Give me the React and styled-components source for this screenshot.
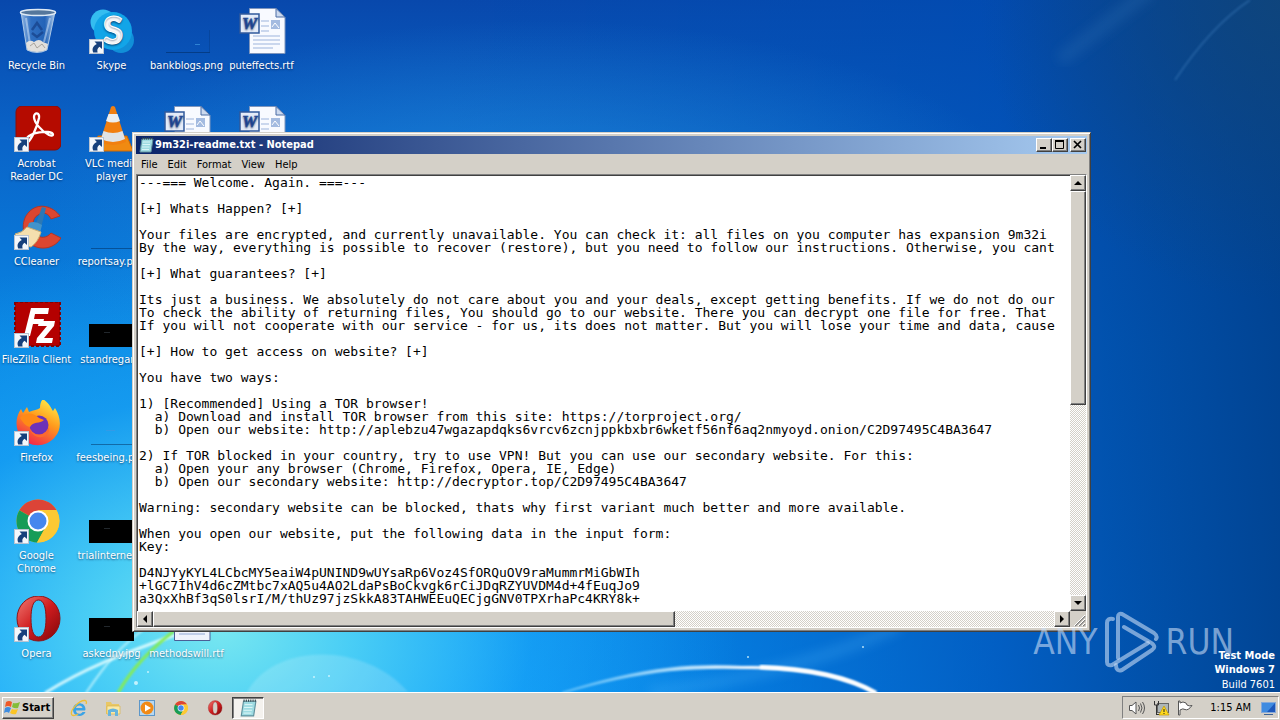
import React from "react";
import styled, { createGlobalStyle, css } from "styled-components";

const GlobalStyle = createGlobalStyle`
  * { box-sizing: border-box; }
  html, body { margin: 0; padding: 0; }
  body {
    font-family: "DejaVu Sans Condensed", "DejaVu Sans", sans-serif;
    font-size: 11px;
    line-height: 13px;
    overflow: hidden;
  }
  button { font: inherit; color: inherit; padding: 0; border: 0; background: none; }
`;

const face = "#d4d0c8";

const raised = css`
  background: ${face};
  border: 1px solid;
  border-color: #ffffff #404040 #404040 #ffffff;
  box-shadow: inset -1px -1px 0 #808080;
`;

const Screen = styled.div`
  display: flex;
  flex-direction: column;
  min-height: 100vh;
  position: relative;
`;

const Desktop = styled.main`
  flex: 1;
  position: relative;
  overflow: hidden;
  background:
    radial-gradient(ellipse 520px 390px at 220px 630px, rgba(125, 235, 240, 0.95) 0, rgba(90, 220, 245, 0.8) 25%, rgba(40, 180, 250, 0.4) 60%, transparent 100%),
    radial-gradient(ellipse 500px 200px at 540px 220px, rgba(40, 150, 225, 0.6) 0, transparent 100%),
    radial-gradient(ellipse 300px 300px at 100% 0, rgba(18, 70, 120, 0.8) 0, transparent 100%),
    linear-gradient(90deg, transparent 35%, rgba(0, 76, 178, 0.75) 78%, rgba(0, 62, 140, 0.92) 100%),
    linear-gradient(180deg, #0848ac 0, #0a64c8 20%, #0886e4 50%, #0898fa 100%);
`;

const Wallpaper = styled.svg`
  position: absolute;
  inset: 0;
  width: 100%;
  height: 100%;
`;

const IconGrid = styled.div`
  position: relative;
  display: grid;
  grid-template-columns: repeat(4, 75px);
  grid-template-rows: repeat(7, 98px);
  width: 300px;
  margin-left: -1px;
`;

const DesktopItem = styled.button`
  grid-column: ${(p) => p.$col};
  grid-row: ${(p) => p.$row};
  display: flex;
  flex-direction: column;
  align-items: center;
  gap: 3px;
  padding-top: 8px;
  color: #ffffff;
  text-align: center;
  text-shadow: 0 1px 2px rgba(0, 20, 60, 0.6);
  white-space: pre;
  svg { width: 48px; height: 48px; flex: none; }
`;

const Window = styled.section`
  position: absolute;
  left: 132px;
  right: 189px;
  top: 132px;
  bottom: 60px;
  display: flex;
  flex-direction: column;
  padding: 3px;
  background: ${face};
  border: 1px solid;
  border-color: ${face} #404040 #404040 ${face};
  box-shadow: inset 1px 1px 0 #ffffff, inset -1px -1px 0 #808080;
`;

const TitleBar = styled.header`
  display: flex;
  align-items: center;
  height: 18px;
  padding: 0 1px 0 2px;
  gap: 1px;
  background: linear-gradient(90deg, #0a246a, #a6caf0);
  color: #ffffff;
  svg.app { width: 16px; height: 16px; }
`;

const Title = styled.h1`
  flex: 1;
  margin: 0;
  font-size: 11px;
  font-weight: bold;
  line-height: 16px;
`;

const CaptionButtons = styled.div`
  display: flex;
  button:last-child { margin-left: 2px; }
`;

const CaptionButton = styled.button`
  ${raised}
  width: 16px;
  height: 14px;
  display: flex;
  svg { width: 13px; height: 11px; }
`;

const MenuBar = styled.nav`
  display: flex;
  height: 20px;
  align-items: center;
  color: #000000;
`;

const MenuItem = styled.button`
  padding: 0 5px;
  height: 18px;
`;

const Editor = styled.div`
  flex: 1;
  min-height: 0;
  display: grid;
  grid-template-columns: minmax(0, 1fr) 16px;
  grid-template-rows: minmax(0, 1fr) 16px;
  border: 1px solid;
  border-color: #808080 #ffffff #ffffff #808080;
  background: ${face};
`;

const TextArea = styled.textarea`
  width: 100%;
  height: 100%;
  margin: 0;
  padding: 0 1px;
  border: 1px solid;
  border-color: #404040 #ffffff #ffffff #404040;
  border-right: 0;
  border-bottom: 0;
  outline: 0;
  resize: none;
  overflow: hidden;
  white-space: pre;
  background: #ffffff;
  color: #000000;
  font-family: "DejaVu Sans Mono", monospace;
  font-size: 13px;
  line-height: 13px;
`;

const ScrollBar = styled.div`
  display: flex;
  flex-direction: ${(p) => (p.$vertical ? "column" : "row")};
  background: repeating-conic-gradient(#ffffff 0 25%, ${face} 0 50%) 0 0 / 2px 2px;
`;

const ScrollButton = styled.button`
  ${raised}
  width: 16px;
  height: 16px;
  flex: none;
  display: flex;
  svg { width: 14px; height: 14px; }
`;

const ScrollThumb = styled.div`
  ${raised}
  flex: 0 0 ${(p) => p.$size};
`;

const ScrollGap = styled.div`
  flex: 1;
`;

const Grip = styled.svg`
  width: 16px;
  height: 16px;
`;

const Watermark = styled.div`
  position: absolute;
  right: 46px;
  bottom: 46px;
  display: flex;
  align-items: center;
  gap: 6px;
  color: rgba(200, 220, 245, 0.6);
  font-size: 35px;
  line-height: 64px;
  pointer-events: none;
  svg { width: 56px; height: 64px; }
`;

const BuildInfo = styled.div`
  position: absolute;
  right: 5px;
  bottom: 27px;
  color: #ffffff;
  text-align: right;
  line-height: 14px;
  strong { display: block; }
  span { display: block; line-height: 16px; }
`;

const TaskBar = styled.footer`
  position: relative;
  display: flex;
  align-items: center;
  height: 28px;
  padding: 2px 1px 0 2px;
  background: ${face};
  border-top: 1px solid #ffffff;
`;

const StartButton = styled.button`
  ${raised}
  display: flex;
  align-items: center;
  gap: 1px;
  width: 52px;
  height: 22px;
  padding-left: 1px;
  font-weight: bold;
  svg { width: 17px; height: 17px; }
`;

const QuickLaunch = styled.div`
  display: flex;
  flex: 1;
  margin-left: 8px;
`;

const TaskButton = styled.button`
  width: 34px;
  height: 22px;
  display: flex;
  align-items: center;
  justify-content: center;
  svg { width: 18px; height: 18px; }
  ${(p) =>
    p.$pressed &&
    css`
      width: 32px;
      background: #f4f2ee;
      border: 1px solid;
      border-color: #404040 #ffffff #ffffff #404040;
      box-shadow: inset 1px 1px 0 #808080;
    `}
`;

const Tray = styled.div`
  display: flex;
  align-items: center;
  gap: 6px;
  height: 23px;
  padding: 0 1px 0 5px;
  border: 1px solid;
  border-color: #808080 #ffffff #ffffff #808080;
  svg { width: 18px; height: 18px; }
  time { margin: 0 2px 0 10px; }
`;

const noteText = `---=== Welcome. Again. ===---

[+] Whats Happen? [+]

Your files are encrypted, and currently unavailable. You can check it: all files on you computer has expansion 9m32i
By the way, everything is possible to recover (restore), but you need to follow our instructions. Otherwise, you cant

[+] What guarantees? [+]

Its just a business. We absolutely do not care about you and your deals, except getting benefits. If we do not do our
To check the ability of returning files, You should go to our website. There you can decrypt one file for free. That
If you will not cooperate with our service - for us, its does not matter. But you will lose your time and data, cause

[+] How to get access on website? [+]

You have two ways:

1) [Recommended] Using a TOR browser!
  a) Download and install TOR browser from this site: https://torproject.org/
  b) Open our website: http://aplebzu47wgazapdqks6vrcv6zcnjppkbxbr6wketf56nf6aq2nmyoyd.onion/C2D97495C4BA3647

2) If TOR blocked in your country, try to use VPN! But you can use our secondary website. For this:
  a) Open your any browser (Chrome, Firefox, Opera, IE, Edge)
  b) Open our secondary website: http://decryptor.top/C2D97495C4BA3647

Warning: secondary website can be blocked, thats why first variant much better and more available.

When you open our website, put the following data in the input form:
Key:

D4NJYyKYL4LCbcMY5eaiW4pUNIND9wUYsaRp6Voz4SfORQuOV9raMummrMiGbWIh
+lGC7IhV4d6cZMtbc7xAQ5u4AO2LdaPsBoCkvgk6rCiJDqRZYUVDM4d+4fEuqJo9
a3QxXhBf3qS0lsrI/M/thUz97jzSkkA83TAHWEEuQECjgGNV0TPXrhaPc4KRY8k+`;

const Shortcut = () => (
  <g>
    <rect x="1.500" y="31.500" width="14" height="14" fill="#f4f7fb" stroke="#b9c4d2" />
    <path d="M6.500 33.500H14V41L11.500 38.800C9.300 40.500 9 42 9.600 44.500H5.200C3.600 40.500 5.300 37.800 8.800 36Z" fill="#16407c" />
  </g>
);

const RecycleBin = () => (
  <svg viewBox="0 0 48 48">
    <defs>
      <linearGradient id="bin" x1="0" x2="1">
        <stop offset="0" stopColor="#b9d5f2" stopOpacity=".8" />
        <stop offset=".3" stopColor="#4b86cc" stopOpacity=".6" />
        <stop offset=".7" stopColor="#2f6dbb" stopOpacity=".7" />
        <stop offset="1" stopColor="#c3daf2" stopOpacity=".9" />
      </linearGradient>
    </defs>
    <path d="M8 4L14 42Q24 47 34 42L42 4Z" fill="url(#bin)" stroke="#aac7e6" />
    <path d="M13 35Q17 31 21 34Q26 30 30 34L35 36L33.500 42Q24 46 14.500 42Z" fill="#e2e0dc" />
    <path d="M17 38L21 35L24 40L29 36L32 40" fill="none" stroke="#a9a49c" />
    <ellipse cx="25" cy="4.500" rx="17.500" ry="3" fill="#55779c" stroke="#dfeaf5" strokeWidth="1.500" />
    <path d="M13 10L17 36M37 10L31 34" stroke="#d9e9fa" strokeWidth="2" opacity=".5" />
    <path d="M19 22L24 15L29 22M30 24L24 29L19 25" fill="none" stroke="#163f86" strokeWidth="2.500" opacity=".7" />
  </svg>
);

const Skype = () => (
  <svg viewBox="0 0 48 48">
    <circle cx="15" cy="14" r="12.500" fill="#34bdf0" />
    <circle cx="33" cy="32" r="13" fill="#118fd8" />
    <circle cx="25" cy="23" r="19" fill="#12a5e8" />
    <text x="25" y="36" textAnchor="middle" fontFamily="Lato, sans-serif" fontWeight="900" fontSize="37" fill="#fff" stroke="#fff">S</text>
    <Shortcut />
  </svg>
);

const WordDoc = () => (
  <svg viewBox="0 0 48 48">
    <path d="M11.500 .500H38L47 9V45.500H11.500Z" fill="#f8faff" stroke="#7f96bd" />
    <path d="M38 .500V9H47Z" fill="#ccd9ee" stroke="#4b6ca5" />
    <path d="M23 13H31M23 18H31M23 23H31M15 28H42M15 32H42M15 36H42M15 40H35" stroke="#9db4dc" />
    <rect x="33" y="12" width="9" height="9" fill="#a4bbe0" />
    <path d="M34 19L37 15L41 20" stroke="#fff" fill="none" />
    <rect x="2" y="6" width="19" height="19" fill="#e4ecf9" stroke="#315a9c" strokeWidth="1.500" />
    <text x="11.500" y="21" textAnchor="middle" fontFamily="Liberation Serif, serif" fontStyle="italic" fontWeight="bold" fontSize="17" fill="#254c9b" stroke="#254c9b" strokeWidth=".5">W</text>
  </svg>
);

const DocFooter = () => (
  <svg viewBox="0 0 48 48">
    <path d="M11.500 .500H47V44.500H11.500Z" fill="#eef2fc" stroke="#4b5f96" />
    <path d="M16 38H42" stroke="#8fa8d6" />
  </svg>
);

const Acrobat = () => (
  <svg viewBox="0 0 48 48">
    <rect x="3" y="0" width="45" height="44" rx="6" fill="#b50b00" stroke="#8c0d06" />
    <path d="M13 34C15 28 26 25 35 26C42 27 41 31 36 29C28 25 21 16 21 11C21 6 27 6 26 12C24 22 18 34 14 37C12 38 11 36 13 34Z" fill="none" stroke="#fff" strokeWidth="2.300" />
    <Shortcut />
  </svg>
);

const Vlc = () => (
  <svg viewBox="0 0 48 48">
    <path d="M10 30H39L45 45H5Z" fill="#f08a12" stroke="#cf6800" />
    <path d="M23 1Q25 -1 27 1L38 36Q25 42 12 36Z" fill="#f17f10" />
    <path d="M20.500 8H29.500L32 15Q25 18 18 15Z" fill="#eceef0" />
    <path d="M15.500 25Q25 29 34.500 25L37 33Q25 39 13 33Z" fill="#dfe3e6" />
    <Shortcut />
  </svg>
);

const CCleaner = () => (
  <svg viewBox="0 0 48 48">
    <path d="M47 12C40 2 25-2 16 8C7 17 9 34 19 41C29 47 42 44 48 34L38 29C34 34 27 35 23 30C18 25 19 14 25 11C31 7 36 10 38 15Z" fill="#dc4630" stroke="#b73422" />
    <path d="M29 3L33 4L28 24L22 22Z" fill="#2c78b4" />
    <path d="M16 19Q22 16 29 21L27 29L14 25Z" fill="#4193cb" />
    <path d="M14 23L28 28Q25 38 18 43Q8 42 2 30Q9 29 14 23Z" fill="#f5dfae" stroke="#cfaf72" />
    <Shortcut />
  </svg>
);

const FileZilla = () => (
  <svg viewBox="0 0 48 48">
    <rect x="2" y="0" width="45" height="44" fill="#b40000" stroke="#870000" strokeWidth="2" strokeDasharray="3 2" />
    <path d="M18 6H36L35 12H22L21 17H31L30 22H20L17 34H11ZM26 19H42L41 24L31 36H40L39 41H23L24 36L34 24H25Z" fill="#fff" />
    <Shortcut />
  </svg>
);

const Firefox = () => (
  <svg viewBox="0 0 48 48">
    <defs>
      <linearGradient id="fox" x1=".8" y1="0" x2=".3" y2="1">
        <stop offset="0" stopColor="#fff04a" />
        <stop offset=".45" stopColor="#ff9a1c" />
        <stop offset="1" stopColor="#f0224d" />
      </linearGradient>
    </defs>
    <path d="M30 -1C37 4 38 8 40 11L42 8C48 17 49 29 42 37C33 48 16 48 8 37C2 29 2 17 8 9L10 13L14 7L16 12C21 10 24 10 27 8C27 4 28 1 30-1Z" fill="url(#fox)" />
    <circle cx="26" cy="25" r="9.500" fill="#6d32b8" />
    <path d="M7 18C12 12 20 12 26 18L31 20C27 24 20 21 17 27C12 26 10 22 7 18Z" fill="#ff8a16" />
    <path d="M17 29C21 37 32 37 36 27C38 38 21 42 17 29Z" fill="#fc6a30" />
    <Shortcut />
  </svg>
);

const ChromeMark = () => (
  <g>
    <circle cx="25" cy="23" r="21.500" fill="#fbc52f" />
    <path d="M25 23L6.400 12.200A21.500 21.500 0 0 1 43.600 12.200L25 13Z" fill="#dc4437" />
    <path d="M25 23L6.400 12.200A21.500 21.500 0 0 0 24 44.500L33 28Z" fill="#169c58" />
    <path d="M25 12H43.400A21.500 21.500 0 0 1 24 44.500L34 27Z" fill="#fcc934" />
    <circle cx="25" cy="23" r="10.500" fill="#fff" />
    <circle cx="25" cy="23" r="8.500" fill="#4587ee" />
  </g>
);

const Chrome = () => (
  <svg viewBox="0 0 48 48"><ChromeMark /><Shortcut /></svg>
);

const OperaMark = () => (
  <g>
    <defs>
      <linearGradient id="opera" x1="0" x2="1" y2="1">
        <stop offset="0" stopColor="#f17b74" />
        <stop offset=".5" stopColor="#cf1c1e" />
        <stop offset="1" stopColor="#7e0609" />
      </linearGradient>
    </defs>
    <path fillRule="evenodd" d="M25.500 0A21.500 22.500 0 1 0 25.500 45A21.500 22.500 0 1 0 25.500 0ZM25.500 4C31 4 33 12 33 22.500C33 33 31 41 25.500 41C20 41 18 33 18 22.500C18 12 20 4 25.500 4Z" fill="url(#opera)" stroke="#8e1215" />
  </g>
);

const Opera = () => (
  <svg viewBox="0 0 48 48"><OperaMark /><Shortcut /></svg>
);

const BlackThumb = () => (
  <svg viewBox="0 0 48 48">
    <rect x="1" y="22" width="45" height="23" fill="#000" />
    <path d="M16 30.500H22" stroke="#22272c" />
  </svg>
);

const ClearThumb = ({ mark }) => (
  <svg viewBox="0 0 48 48">
    <path d="M3 44.500H47" stroke="#00234f" opacity=".45" />
    <path d="M46.500 22V44" stroke="#00234f" opacity=".2" />
    {mark && <path d={mark} stroke="#3f98e2" opacity=".7" />}
  </svg>
);

const BankThumb = () => <ClearThumb mark="M32 36.500H37" />;
const FeesThumb = () => <ClearThumb mark="M18 30.500H27" />;

const NotepadMark = () => (
  <svg className="app" viewBox="0 0 16 16">
    <path d="M4 2H15L13 15H2Z" fill="#9edbe2" stroke="#5e8f9c" />
    <path d="M5 5H12M4.500 7.500H12M4 10H11.500M4 12.500H11" stroke="#e6fbfb" strokeWidth=".8" />
    <path d="M4 1.500H15" stroke="#33484f" strokeDasharray="1 1" strokeWidth="2" />
  </svg>
);

const desktopItems = [
  [1, 1, RecycleBin, "Recycle Bin"],
  [1, 2, Acrobat, "Acrobat\nReader DC"],
  [1, 3, CCleaner, "CCleaner"],
  [1, 4, FileZilla, "FileZilla Client"],
  [1, 5, Firefox, "Firefox"],
  [1, 6, Chrome, "Google\nChrome"],
  [1, 7, Opera, "Opera"],
  [2, 1, Skype, "Skype"],
  [2, 2, Vlc, "VLC media\nplayer"],
  [2, 3, ClearThumb, "reportsay.png"],
  [2, 4, BlackThumb, "standregar..."],
  [2, 5, FeesThumb, "feesbeing.png"],
  [2, 6, BlackThumb, "trialinternet..."],
  [2, 7, BlackThumb, "askedny.jpg"],
  [3, 1, BankThumb, "bankblogs.png"],
  [3, 2, WordDoc, ""],
  [3, 7, DocFooter, "methodswill.rtf"],
  [4, 1, WordDoc, "puteffects.rtf"],
  [4, 2, WordDoc, ""],
];

const arrows = {
  up: "M3 9H11L7 5Z",
  down: "M3 5H11L7 9Z",
  left: "M9 3V11L5 7Z",
  right: "M5 3V11L9 7Z",
};

const Arrow = ({ dir }) => (
  <ScrollButton aria-label={`Scroll ${dir}`}>
    <svg viewBox="0 0 14 14"><path d={arrows[dir]} fill="#000" /></svg>
  </ScrollButton>
);

const NotepadWindow = () => (
  <Window>
    <TitleBar>
      <NotepadMark />
      <Title>9m32i-readme.txt - Notepad</Title>
      <CaptionButtons>
        <CaptionButton aria-label="Minimize">
          <svg viewBox="0 0 13 11"><path d="M3 9H9" stroke="#000" strokeWidth="2" /></svg>
        </CaptionButton>
        <CaptionButton aria-label="Maximize">
          <svg viewBox="0 0 13 11"><path d="M2.500 2V9.500H10.500V2" fill="none" stroke="#000" /><path d="M2 2H11" stroke="#000" strokeWidth="2" /></svg>
        </CaptionButton>
        <CaptionButton aria-label="Close">
          <svg viewBox="0 0 13 11"><path d="M3 2L10 9M10 2L3 9" stroke="#000" strokeWidth="1.700" /></svg>
        </CaptionButton>
      </CaptionButtons>
    </TitleBar>
    <MenuBar>
      {["File", "Edit", "Format", "View", "Help"].map((m) => <MenuItem key={m}>{m}</MenuItem>)}
    </MenuBar>
    <Editor>
      <TextArea aria-label="Document text" wrap="off" spellCheck={false} defaultValue={noteText} />
      <ScrollBar $vertical>
        <Arrow dir="up" />
        <ScrollThumb $size="49%" />
        <ScrollGap />
        <Arrow dir="down" />
      </ScrollBar>
      <ScrollBar>
        <Arrow dir="left" />
        <ScrollThumb $size="56%" />
        <ScrollGap />
        <Arrow dir="right" />
      </ScrollBar>
      <Grip viewBox="0 0 16 16">
        <path d="M5 15L15 5M9 15L15 9M13 15L15 13" stroke="#808080" strokeWidth="1.500" />
        <path d="M4 15L15 4M8 15L15 8M12 15L15 12" stroke="#fff" />
      </Grip>
    </Editor>
  </Window>
);

const App = () => (
  <Screen>
    <GlobalStyle />
    <Desktop>
      <Wallpaper viewBox="0 0 1280 692" preserveAspectRatio="none">
        <defs>
          <filter id="soft"><feGaussianBlur stdDeviation="1.200" /></filter>
          <filter id="haze"><feGaussianBlur stdDeviation="6" /></filter>
          <linearGradient id="arc" x1="562" x2="876" y1="0" y2="0" gradientUnits="userSpaceOnUse">
            <stop offset="0" stopColor="#8fd8ff" stopOpacity=".6" />
            <stop offset=".6" stopColor="#fff" />
            <stop offset="1" stopColor="#fff" />
          </linearGradient>
        </defs>
        <path d="M247 692C275 642 365 642 408 692Z" fill="#fff" opacity=".16" filter="url(#soft)" />
        <path d="M650 692C760 680 850 650 900 625" stroke="#5cc0ff" strokeWidth="10" fill="none" opacity=".25" filter="url(#haze)" />
        <path d="M562 693C650 665 700 665 742 667C800 666 846 675 876 693C842 675 800 667 742 668C700 667 650 667 562 693Z" fill="none" stroke="url(#arc)" strokeWidth="2" filter="url(#soft)" />
        <path d="M760 667C815 669 850 678 876 693" fill="none" stroke="#fff" strokeWidth="4" filter="url(#soft)" />
        <path d="M45 693C85 668 120 655 175 635" fill="none" stroke="#e9ffff" strokeWidth="3" opacity=".85" filter="url(#soft)" />
        <path d="M86 693C105 665 120 645 150 625" fill="none" stroke="#d8fcff" strokeWidth="2" opacity=".7" filter="url(#soft)" />
        <path d="M118 693C132 668 150 650 175 630" fill="none" stroke="#84ec58" strokeWidth="3" filter="url(#soft)" />
        <path d="M1175 80C1195 50 1220 20 1250 0" fill="none" stroke="#3a78b8" strokeWidth="2" opacity=".5" filter="url(#soft)" />
        <path d="M1060 60L1150 -10" fill="none" stroke="#2f70b4" strokeWidth="14" opacity=".3" filter="url(#haze)" />
        <g fill="#dffaff" opacity=".8">
          <circle cx="314" cy="677" r="1" /><circle cx="329" cy="676" r="1" />
          <circle cx="136" cy="683" r="2" /><circle cx="148" cy="672" r="1" />
          <circle cx="863" cy="647" r="1" /><circle cx="748" cy="657" r="1" />
        </g>
      </Wallpaper>
      <IconGrid>
        {desktopItems.map(([col, row, Icon, label]) => (
          <DesktopItem key={`${col}-${row}`} $col={col} $row={row}>
            <Icon />
            {label}
          </DesktopItem>
        ))}
      </IconGrid>
      <NotepadWindow />
    </Desktop>
    <Watermark>
      ANY
      <svg viewBox="0 0 56 64" fill="none" stroke="currentColor" strokeWidth="4" strokeLinejoin="round" strokeLinecap="round">
        <path d="M9 9Q3 8 3 13V52Q3 56 8 55L44 33" />
        <path d="M14 48V7Q14 3 18 4L50 23Q54 26 52 29M20 17L44 31Q54 36 48 40L18 60Q12 62 12 55" />
      </svg>
      RUN
    </Watermark>
    <BuildInfo>
      <strong>Test Mode</strong>
      <strong>Windows 7</strong>
      <span>Build 7601</span>
    </BuildInfo>
    <TaskBar>
      <StartButton>
        <svg viewBox="0 0 17 17">
          <path d="M2 3Q5 1 8 3L7 8Q4 6 1 8Z" fill="#ef5a28" />
          <path d="M9 4Q12 5 16 3L14 9Q11 10 8 8Z" fill="#84bd3a" />
          <path d="M1 9Q4 7 7 9L5 14Q3 12 0 14Z" fill="#3f8de0" />
          <path d="M8 10Q11 11 14 10L12 15Q9 16 6 14Z" fill="#fbc526" />
        </svg>
        Start
      </StartButton>
      <QuickLaunch>
        <TaskButton aria-label="Internet Explorer">
          <svg viewBox="0 0 18 18">
            <path d="M15 11.500H6C6 15 11 16 12.500 13H15.500C13 19 3 18 3 10.500C3 2.500 15.500 2 15.500 10.500ZM6 9H12.500C12 5.500 6.500 5.500 6 9Z" fill="#3ba3e6" fillRule="evenodd" />
            <path d="M2 16C-1 12 9 1 15 1.500C17 2 16.500 4 16 5M2 16C4 17.500 7 15.500 8 15" fill="none" stroke="#eebf36" strokeWidth="1.300" />
          </svg>
        </TaskButton>
        <TaskButton aria-label="Windows Explorer">
          <svg viewBox="0 0 18 18">
            <path d="M2 3H7L8 5H15V15H2Z" fill="#e9c765" />
            <path d="M3 7H16V15H3Z" fill="#fbe9a5" stroke="#d9b44d" strokeWidth=".7" />
            <path d="M4 17V11Q9 8 14 11V17H11V13H7V17Z" fill="#67b4dc" />
          </svg>
        </TaskButton>
        <TaskButton aria-label="Windows Media Player">
          <svg viewBox="0 0 18 18">
            <rect x="1.500" y="1.500" width="15" height="15" fill="#b7d8f2" stroke="#5d97c9" />
            <circle cx="9" cy="9" r="6.500" fill="#f18a16" />
            <path d="M7 5.500V12.500L13 9Z" fill="#fff" />
          </svg>
        </TaskButton>
        <TaskButton aria-label="Google Chrome"><svg viewBox="-3 -5 56 56"><ChromeMark /></svg></TaskButton>
        <TaskButton aria-label="Opera"><svg viewBox="-3 -5 56 56"><OperaMark /></svg></TaskButton>
        <TaskButton aria-label="Notepad" $pressed><NotepadMark /></TaskButton>
      </QuickLaunch>
      <Tray>
        <svg viewBox="0 0 18 18" fill="none" stroke="#555">
          <path d="M1.500 6.500H4L8 3V15L4 11.500H1.500Z" fill="#fff" />
          <path d="M10.500 6Q12.500 9 10.500 12M12.500 4.500Q15.500 9 12.500 13.500M14.500 3Q18.500 9 14.500 15" />
        </svg>
        <svg viewBox="0 0 18 18">
          <rect x="5.500" y="4.500" width="11" height="9" fill="#aeb6b8" stroke="#666" />
          <path d="M2.500 2V6H6.500V2M4.500 6V16M4 15.500H10" fill="none" stroke="#333" />
          <path d="M12 7L17 16H7Z" fill="#ffd91e" stroke="#c39900" strokeWidth=".7" />
          <path d="M12 10V13M12 14V15" stroke="#222" />
        </svg>
        <svg viewBox="0 0 18 18" fill="#fff" stroke="#555">
          <path d="M2.500 2V16H4V11Q7 9 9 10.500Q12 12 16 6.500Q13 7.500 11 6L10 4Q7 2 4 4V2Z" />
        </svg>
        <time>1:15 AM</time>
        <svg viewBox="0 0 18 18">
          <rect x="2.500" y="3.500" width="14" height="10" fill="#1c57bb" stroke="#86a9d9" />
          <path d="M3 4H16L8 13H3Z" fill="#3f8be0" />
          <path d="M5 15.500H14" stroke="#3d6396" />
        </svg>
      </Tray>
    </TaskBar>
  </Screen>
);

export default App;
